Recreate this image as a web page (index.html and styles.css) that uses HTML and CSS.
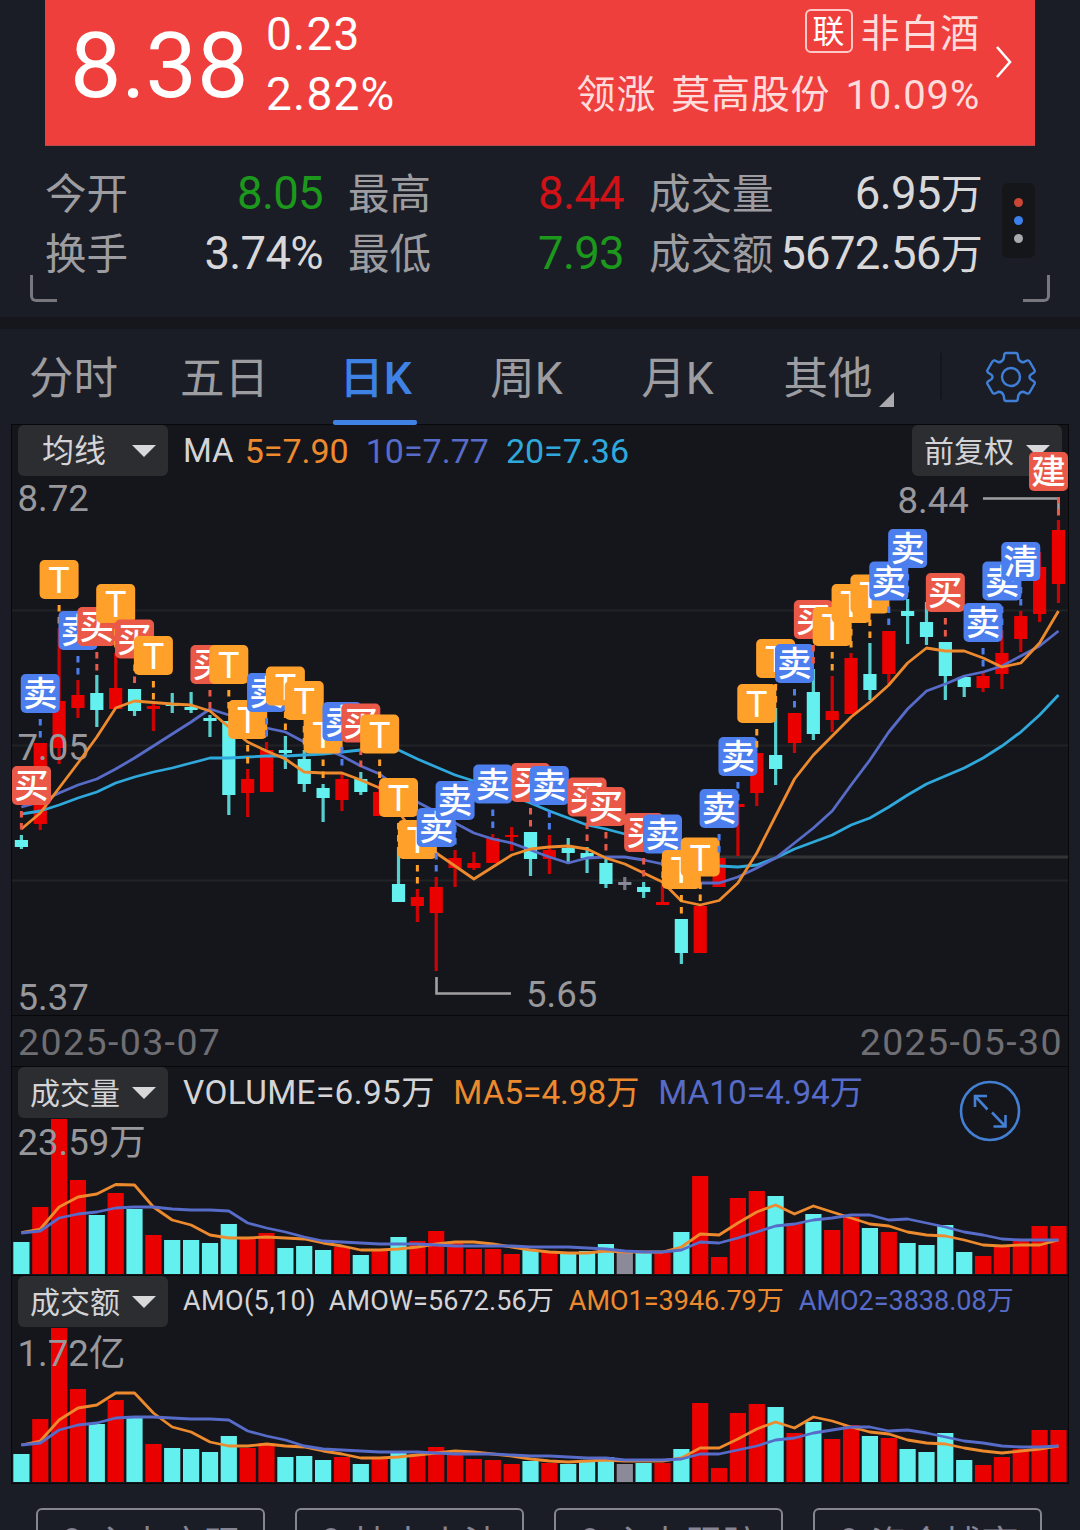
FILE: index.html
```html
<!DOCTYPE html>
<html lang="zh-CN">
<head>
<meta charset="utf-8">
<title>日K</title>
<link rel="stylesheet" href="styles.css">
</head>
<body>
<header class="quote">
  <div class="price">8.38</div>
  <div class="change"><span>0.23</span><span>2.82%</span></div>
  <div class="sector">
    <div class="sector-row"><span class="tag">联</span><span>非白酒</span></div>
    <div class="sector-row lead"><span>领涨</span><span>莫高股份</span><span class="pct">10.09%</span></div>
  </div>
  <svg class="chevron" width="18" height="32" viewBox="0 0 18 32"><path d="M2 1L15 16L2 31"/></svg>
</header>

<section class="stats">
  <dl class="stat-grid">
    <dt>今开</dt><dd class="down">8.05</dd><dt>最高</dt><dd class="up">8.44</dd><dt>成交量</dt><dd>6.95<i>万</i></dd>
    <dt>换手</dt><dd>3.74%</dd><dt>最低</dt><dd class="down">7.93</dd><dt>成交额</dt><dd>5672.56<i>万</i></dd>
  </dl>
  <div class="more"><b class="dot-red"></b><b class="dot-blue"></b><b class="dot-grey"></b></div>
  <span class="corner corner-left"></span>
  <span class="corner corner-right"></span>
</section>

<nav class="tabs">
  <a>分时</a><a>五日</a><a class="active">日K</a><a>周K</a><a>月K</a><a class="other">其他</a>
  <span class="tab-divider"></span>
  <svg class="gear" width="52" height="52" viewBox="-26 -26 52 52"><path d="M-5-24H5Q6.5-24 6.8-22L7.3-18.5Q9-14.5 12.5-14.8L16-16.5Q17.5-17 18.5-15.5L23.5-7Q24.2-5.5 23-4.5L19.5-2.2Q17.5 0 19.5 2.2L23 4.5Q24.2 5.5 23.5 7L18.5 15.5Q17.5 17 16 16.5L12.5 14.8Q9 14.5 7.3 18.5L6.8 22Q6.5 24 5 24H-5Q-6.5 24-6.8 22L-7.3 18.5Q-9 14.5-12.5 14.8L-16 16.5Q-17.5 17-18.5 15.5L-23.5 7Q-24.2 5.5-23 4.5L-19.5 2.2Q-17.5 0-19.5-2.2L-23-4.5Q-24.2-5.5-23.5-7L-18.5-15.5Q-17.5-17-16-16.5L-12.5-14.8Q-9-14.5-7.3-18.5L-6.8-22Q-6.5-24-5-24Z"/><circle r="9"/></svg>
</nav>

<main class="charts">
  <section class="panel main-panel">
    <div class="toolbar">
      <button class="select">均线<i></i></button>
      <span class="w">MA</span><span class="ma5 near">5=7.90</span><span class="ma10">10=7.77</span><span class="ma20">20=7.36</span>
      <button class="select right">前复权<i></i></button>
    </div>
    <svg id="kline" class="plot" width="1056" height="539" viewBox="12 476 1056 539"></svg>
  </section>
  <div class="dates"><span>2025-03-07</span><span>2025-05-30</span></div>
  <section class="panel volume">
    <div class="toolbar">
      <button class="select">成交量<i></i></button>
      <span class="w">VOLUME=6.95万</span><span class="ma5">MA5=4.98万</span><span class="ma10">MA10=4.94万</span>
    </div>
    <svg id="volume" class="plot" width="1056" height="157" viewBox="12 1118 1056 157"></svg>
    <svg class="expand" width="62" height="62" viewBox="959 1080 62 62"><circle cx="990" cy="1111" r="29"/><path d="M987.5 1109.5L975 1096M975 1107V1096H987M992 1112.5L1005.5 1126.5M1005.5 1115V1126.5H993.5"/></svg>
  </section>
  <section class="panel amount">
    <div class="toolbar small">
      <button class="select">成交额<i></i></button>
      <span class="w">AMO(5,10)</span><span class="w">AMOW=5672.56万</span><span class="ma5">AMO1=3946.79万</span><span class="ma10">AMO2=3838.08万</span>
    </div>
    <svg id="amount" class="plot" width="1056" height="157" viewBox="12 1327 1056 157"></svg>
  </section>
</main>

<footer class="actions">
  <button><i></i>主力变现</button><button><i></i>扶中小法</button><button><i></i>主力跟踪</button><button><i></i>资金博弈</button>
</footer>
<script src="chart.js"></script>
</body>
</html>
```
FILE: styles.css
```css
* { box-sizing: border-box; }
body {
  margin: 0;
  width: 1080px;
  height: 1530px;
  overflow: hidden;
  background: #1b1d26;
  color: #d8d8da;
  font-family: Roboto, "Noto Sans CJK SC", sans-serif;
}
i { font-style: normal; }
button { font-family: inherit; border: 0; margin: 0; padding: 0; color: inherit; }

.quote {
  display: flex;
  height: 146px;
  margin: 0 45px;
  padding-left: 25px;
  background: #ef3f3d;
  border-bottom: 1px solid #b9494c;
  color: #fff;
}
.price { width: 196px; font-size: 91.5px; line-height: 131px; white-space: nowrap; }
.change { display: flex; flex-direction: column; padding-top: 4px; font-size: 46px; line-height: 60px; letter-spacing: 1.2px; }
.sector { margin-left: auto; padding-top: 4px; font-size: 39px; line-height: 61px; color: #ffdcdc; letter-spacing: .8px; }
.sector-row { display: flex; justify-content: flex-end; align-items: center; height: 61px; gap: 8px; }
.lead { gap: 15px; }
.pct { font-size: 40px; }
.tag {
  width: 48px; height: 44px;
  margin-top: -7px;
  border: 2px solid #ffc9c8;
  border-radius: 6px;
  color: #fff;
  font-size: 32px; line-height: 42px; text-align: center; letter-spacing: 0;
}
.chevron { margin: 46px 22px 0 15px; fill: none; stroke: #fff; stroke-width: 2.6; flex: none; }

.stats {
  position: relative;
  display: flex;
  height: 171px;
  padding: 18px 45px 0;
}
.stat-grid {
  display: grid;
  grid-template-columns: 83px 195px 25px 83px 193px 25px 125px 208px;
  grid-template-rows: 60px 60px;
  margin: 0;
  line-height: 60px;
  white-space: nowrap;
}
.stat-grid dt { padding-top: 1px; font-size: 41.5px; color: #9d9da1; }
.stat-grid dt:nth-of-type(3n+1) { grid-column: 1; }
.stat-grid dt:nth-of-type(3n+2) { grid-column: 4; }
.stat-grid dt:nth-of-type(3n) { grid-column: 7; }
.stat-grid dd { margin: 0; font-size: 45.5px; text-align: right; color: #d8d8da; letter-spacing: -.7px; }
.stat-grid dd i { font-size: 42px; }
.stat-grid .up { color: #d01217; }
.stat-grid .down { color: #1c981c; }
.more {
  display: flex; flex-direction: column; align-items: center; justify-content: center; gap: 9px;
  width: 33px; height: 75px;
  margin: 19px 0 0 20px;
  border-radius: 6px;
  background: #15161a;
}
.more b { width: 9px; height: 9px; border-radius: 50%; }
.dot-red { background: #cb4636; }
.dot-blue { background: #3b80ec; }
.dot-grey { background: #aaaaae; }
.corner { position: absolute; bottom: 15px; width: 27px; height: 27px; border: solid #77777d; }
.corner-left { left: 30px; border-width: 0 0 3px 3px; border-bottom-left-radius: 6px; }
.corner-right { right: 30px; border-width: 0 3px 3px 0; border-bottom-right-radius: 6px; }

.tabs {
  display: flex;
  height: 108px;
  border-top: 12px solid #16171c;
  font-size: 44.5px;
  color: #9d9da1;
}
.tabs a { position: relative; width: 151px; height: 96px; padding-right: 4px; line-height: 101px; text-align: center; }
.tabs .active { color: #3f82e6; font-weight: 500; }
.tabs .active::after {
  content: ""; position: absolute; left: 31px; bottom: 0;
  width: 84px; height: 5px; border-radius: 2px; background: #3f82e6;
}
.tabs .other { padding-right: 5px; }
.tabs .other::after {
  content: ""; position: absolute; left: 124px; top: 63px;
  border-left: 15px solid transparent; border-bottom: 15px solid #aaaaae;
}
.tab-divider { width: 2px; height: 46px; margin: 24px 43px 0 34px; background: #15161b; }
.gear { margin-top: 22px; fill: none; stroke: #3f7fd8; stroke-width: 2.4; }

.charts { margin: 0 12px; background: #15161b; outline: 1px solid #08080b; height: 1058px; }
.panel { position: relative; }
.toolbar { display: flex; align-items: flex-start; height: 51px; padding: 0 6px; font-size: 33.3px; line-height: 51px; white-space: nowrap; }
.main-panel .toolbar { font-size: 34px; line-height: 52px; }
.toolbar span { margin-left: 17px; }
.toolbar .w { margin-left: 15px; letter-spacing: .4px; }
.toolbar .w + .w { margin-left: 13px; letter-spacing: .1px; }
.toolbar .near { margin-left: 11px; }
.volume .ma5, .volume .ma10 { margin-left: 18.5px; }
.toolbar.small { font-size: 27px; line-height: 50px; }
.toolbar.small .ma5, .toolbar.small .ma10 { margin-left: 15px; }
.w { color: #d4d4d6; }
.ma5 { color: #ee8a2e; }
.ma10 { color: #576bc8; }
.ma20 { color: #2fa8dc; }
.main-panel .w { font-size: 33px; letter-spacing: 0; }
.select {
  display: flex; align-items: center; justify-content: flex-end; gap: 12px;
  width: 150px; height: 51px; padding: 1px 12px 0 0;
  border-radius: 6px;
  background: #2c2d31;
  color: #d4d4d6;
  font-size: 30px; line-height: 51px;
}
.select i { border: 12px solid transparent; border-bottom: 0; border-top: 12px solid #d8d8da; }
.main-panel .select:first-child { font-size: 32px; gap: 26px; }
.select.right { margin-left: auto; }
.plot { display: block; overflow: visible; }
.plot text { font-family: Roboto, "Noto Sans CJK SC", sans-serif; }
.axis { font-size: 36.6px; fill: #98989c; }
.dates {
  display: flex; justify-content: space-between;
  height: 52px; padding: 0 5px 0 6px;
  border: solid #08080b; border-width: 1px 0;
  font-size: 37.5px; line-height: 53px; letter-spacing: 1.4px; color: #6e6e73;
}
.amount { border-top: 1px solid #08080b; }
.expand { position: absolute; left: 947px; top: 13px; fill: none; stroke: #437fd2; stroke-width: 2.6; }

.actions { display: flex; gap: 30px; padding: 25px 36px 0; }
.actions button {
  display: flex; align-items: center; justify-content: center; gap: 10px;
  flex: none; width: 229px; height: 76px;
  border: 2px solid #858593; border-radius: 6px;
  background: none; color: #858593; font-size: 37px; line-height: 40px;
}
.actions i { width: 24px; height: 36px; border: 3px solid #858593; border-radius: 50%; }
```
FILE: chart.js
```js
const RED = '#eb0000', CYAN = '#63f0ee', GREY = '#8a8a98';
const X0 = 21.4, STEP = 18.856;
const cx = i => X0 + STEP * i;
const tone = { r: RED, c: CYAN, g: GREY };

// [direction, high, body top, body bottom, low] in plot units
const candles = [
  ['c',835,840,847,849],['r',743,743,824,830],['r',628,701,748,764],['r',680,695,708,718],['c',675,693,710,727],
  ['r',653,688,709,709],['c',689,689,711,716],['r',704,706,709,731],['c',693,704,706,713],['c',692,707,710,713],
  ['c',715,718,721,737],['c',721,721,795,815],['r',769,779,793,817],['r',742,750,792,792],['c',736,750,753,769],
  ['c',750,759,784,792],['c',784,788,798,822],['r',773,779,800,811],['c',772,779,792,795],['r',784,792,816,816],
  ['c',847,884,902,902],['r',889,897,906,922],['r',877,887,913,971],['r',850,858,868,887],['r',852,863,868,870],
  ['r',834,838,863,863],['r',827,835,837,851],['c',832,832,859,876],['r',835,850,859,874],['c',838,848,853,864],
  ['c',847,853,858,873],['c',856,863,884,888],['g',877,882,885,890],['c',882,887,892,898],['r',883,902,905,905],
  ['c',919,919,953,964],['r',906,906,953,953],['r',858,858,887,887],['r',806,804,807,856],['r',753,753,793,806],
  ['c',708,755,769,785],['r',713,713,743,753],['c',669,692,734,740],['r',676,711,720,732],['r',653,658,714,714],
  ['c',643,674,690,700],['r',631,631,674,684],['c',599,611,616,644],['c',602,622,637,645],['c',642,642,676,700],
  ['c',676,677,687,697],['r',673,676,688,692],['r',630,653,674,689],['r',611,616,639,652],['r',552,567,614,622],
  ['r',520,530,584,603]
];
const ma5 = [829,813,788,763,737,708,701,702.5,704,705,711,727,742,751,759,772,773,773,780,788,812,837,853,866,879,867,855,849,847,846,849,858,864,873,882,901,905,900.5,883,853,816,779,755,736,717,702,685,663,648,651,651,658,667,663,643,611];
const ma10 = [807,802,793,785,779,769,758,746,734,722,709,715,722,728,732,742,748,756,766,774,788,802,812,823,833,839,843,850,857,863,858,857,857,860,864,877,883,883,877,868,858,843,828,811,785,760,732,709,691,684,676,672,666,656,646,631];
const ma20 = [814,811,805,798,792,783,777,772,768,763,758,758,757,756,756,755,754,752,750,749,750,759,767,775,781,789,796,803,811,818,825,829,834,840,845,852,859,866,867,865,858,849,842,835,825,818,807,795,784,776,768,758,746,732,715,695];
const marks = [
  [0,'买',766],[1,'卖',674],[2,'T',560],[3,'卖',611],[4,'买',607],[5,'T',584],[6,'买',619.5],[7,'T',636],[10,'买',645],
  [11,'T',645],[12,'T',700],[13,'卖',673],[14,'T',666.5],[15,'T',681],[16,'T',714.5],[17,'卖',702],[18,'买',703.5],[19,'T',714.5],
  [20,'T',778],[21,'T',820],[22,'卖',808],[23,'卖',781],[25,'卖',764.5],[27,'买',763],[28,'卖',766],[30,'买',777.5],[31,'买',787],
  [33,'买',813],[34,'卖',814.5],[35,'T',850],[36,'T',837.5],[37,'卖',789],[38,'卖',737],[39,'T',684],[40,'T',639],[41,'卖',644],
  [42,'买',600],[43,'T',607],[44,'T',584],[45,'T',574.5],[46,'卖',561.5],[47,'卖',529],[49,'买',573],[51,'卖',603],[52,'卖',561.5],
  [53,'清',542],[55,'建',452]
];
const markTone = { '买': '#ea5948', '建': '#ea5948', '卖': '#4d7eee', '清': '#4d7eee', 'T': '#ffa02b' };

const line = (ys, color) =>
  `<polyline points="${ys.map((y, i) => cx(i).toFixed(1) + ',' + y).join(' ')}" fill="none" stroke="${color}" stroke-width="2.8" stroke-linejoin="round"/>`;
const label = (x, y, s) => `<text class="axis" x="${x}" y="${y}">${s}</text>`;

let k = '';
[610.5, 745.5, 880.5].forEach(y => k += `<path d="M12 ${y}H1068" stroke="#222327" stroke-width="2"/>`);
k += '<path d="M720 857H1068" stroke="#343436" stroke-width="3"/>';
candles.forEach(([d, h, t, b, l], i) => {
  const c = tone[d], x = cx(i);
  k += `<rect x="${x - 1.6}" y="${h}" width="3.2" height="${l - h}" fill="${c}" opacity=".85"/>`;
  k += `<rect x="${x - 6.6}" y="${t}" width="13.2" height="${b - t}" fill="${c}"/>`;
});
k += label(17.5, 510.5, '8.72') + label(17.5, 760, '7.05') + label(17.5, 1010, '5.37') + label(897.5, 513, '8.44') + label(526, 1007, '5.65');
k += '<path d="M983 498.5H1058.5V515M436.5 977V993.5H511" fill="none" stroke="#a0a0a3" stroke-width="2.6"/>';
k += line(ma20, '#2fa8dc') + line(ma10, '#576bc8') + line(ma5, '#ee8a2e');
marks.forEach(([i, s, y]) => {
  // badges stay inside the plot while their leader keeps the candle's x
  const x = cx(i), bx = Math.min(Math.max(x, 31.5), 1048.5), c = markTone[s];
  k += `<path d="M${x} ${y + 45}v18.5" stroke="${c}" stroke-width="3" stroke-dasharray="6.5 5.5"/>`;
  k += `<rect x="${bx - 19.5}" y="${y}" width="39" height="39" rx="5" fill="${c}"/>`;
  k += s === 'T'
    ? `<text x="${bx}" y="${y + 33}" font-size="36" fill="#fff" text-anchor="middle">T</text>`
    : `<text x="${bx}" y="${y + 32}" font-size="34.5" font-weight="500" fill="#fff" text-anchor="middle">${s}</text>`;
});
document.getElementById('kline').innerHTML = k;

function bars(id, base, tops, m5, m10, x, y, text) {
  let s = tops.map((t, i) =>
    `<rect x="${(cx(i) - 8.1).toFixed(1)}" y="${t}" width="16.2" height="${base - t}" fill="${tone[candles[i][0]]}"/>`).join('');
  s += label(x, y, text) + line(m5, '#ee8a2e') + line(m10, '#576bc8');
  document.getElementById(id).innerHTML = s;
}

bars('volume', 1274,
  [1242,1207,1119,1180,1215,1193,1209,1235,1240,1240,1243,1224,1239,1233,1248,1246,1250,1247,1255,1251,1237,1241,1231,1243,1249,1249,1254,1250,1252,1254,1251,1244,1253,1253,1253,1232,1176,1257,1198,1191,1196,1223,1214,1230,1217,1228,1232,1243,1245,1225,1252,1256,1247,1240,1226,1226],
  [1232.7,1229,1207,1197,1194,1184.5,1185,1207,1220,1225,1235,1238,1238,1237,1238,1239,1243,1246,1250,1250,1249,1247,1244,1242,1242,1244,1247,1250,1252,1253,1253,1251,1252,1252,1252,1247,1234,1235,1223,1212,1205,1214,1206,1212,1218,1224,1226,1232,1235,1236,1240,1245,1246,1245,1245,1240],
  [1233,1231,1218,1214,1212,1208,1207,1207,1209,1210,1210,1211,1223,1228,1232,1237,1241,1242,1243,1244,1244,1244,1245,1246,1246,1246,1246,1247,1247,1247,1248,1249,1251,1252,1252,1250,1242,1243,1238,1232,1226,1224,1220,1218,1215,1215,1220,1219,1223,1227,1232,1235,1239,1240,1240,1240],
  17.5, 1155, '23.59万');

bars('amount', 1482,
  [1454,1419,1328,1389,1424,1400,1418,1444,1448,1449,1452,1436,1448,1443,1457,1456,1460,1457,1464,1459,1451,1454,1447,1455,1459,1460,1464,1461,1463,1464,1462,1457,1464,1463,1463,1449,1403,1468,1413,1404,1407,1433,1422,1439,1425,1436,1438,1449,1452,1433,1460,1465,1457,1449,1430,1430],
  [1445,1441,1420,1408,1405,1393,1393,1413,1427,1432,1442,1446,1446,1444,1446,1447,1451,1454,1458,1458,1457,1455,1453,1451,1452,1454,1456,1459,1461,1462,1461,1460,1461,1461,1461,1458,1448,1448,1439,1429,1422,1428,1417,1421,1427,1432,1434,1440,1443,1444,1448,1451,1453,1451,1449,1446],
  [1445,1443,1430,1425,1423,1418,1417,1417,1418,1419,1419,1420,1431,1436,1440,1446,1449,1450,1451,1452,1452,1452,1453,1454,1454,1454,1455,1456,1456,1457,1458,1458,1460,1460,1460,1459,1454,1454,1450,1446,1440,1438,1433,1430,1427,1427,1431,1430,1433,1437,1441,1443,1446,1447,1447,1446],
  17.5, 1366, '1.72亿');
```
